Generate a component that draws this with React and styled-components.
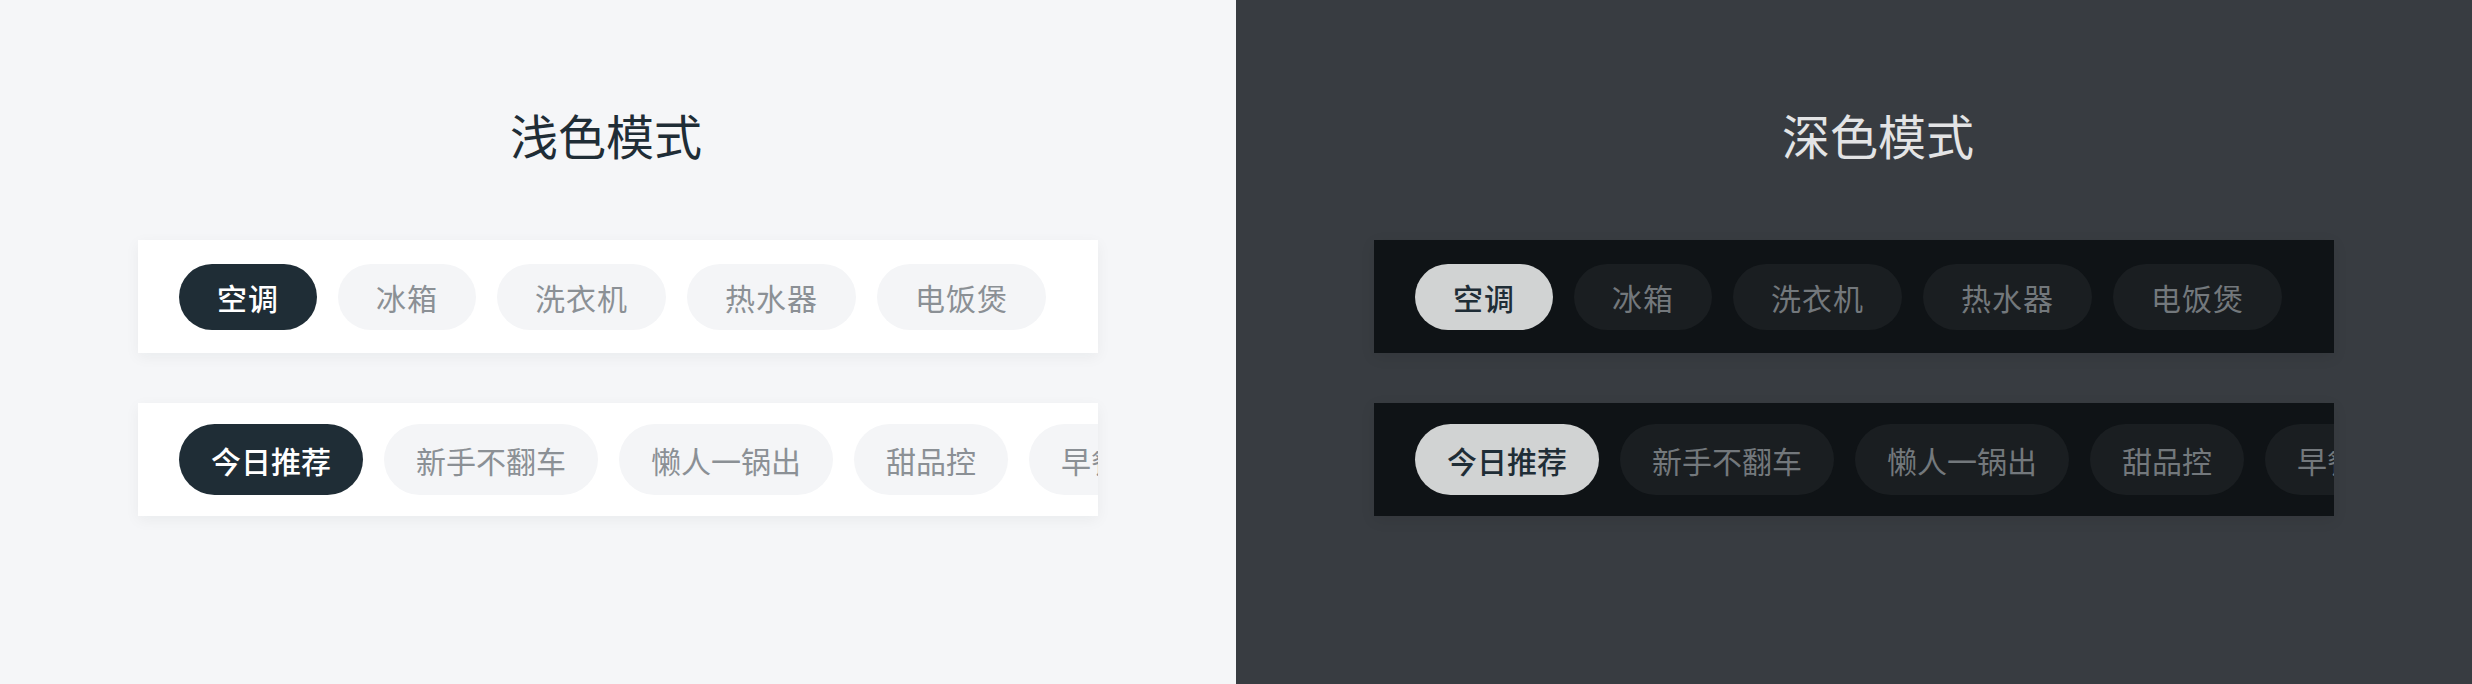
import React from "react";
import styled, {createGlobalStyle} from "styled-components";

const GlobalStyle = createGlobalStyle`
  html, body {
    margin: 0;
    padding: 0;
  }

  body {
    font-family: "Noto Sans CJK SC", "Noto Sans", sans-serif;
  }
`;

const themes = {
    light: {
        bg: "#f5f6f8",
        title: "#1f2d36",
        card: "#ffffff",
        shadow: "0 4px 14px rgba(20, 30, 40, 0.05)",
        chip: "#f4f5f7",
        chipText: "#8b9095",
        active: "#1f2d36",
        activeText: "#ffffff",
    },
    dark: {
        bg: "#383c41",
        title: "#e3e4e5",
        card: "#0f1316",
        shadow: "0 4px 14px rgba(0, 0, 0, 0.08)",
        chip: "#1a1e21",
        chipText: "#73787c",
        active: "#d1d3d3",
        activeText: "#1f2d36",
    },
};

const appliances = ["空调", "冰箱", "洗衣机", "热水器", "电饭煲"];
const recipes = ["今日推荐", "新手不翻车", "懒人一锅出", "甜品控", "早餐"];

const Page = styled.div`
  display: grid;
  grid-template-columns: 1236px 1236px;
  height: 684px;
`;

const Panel = styled.section`
  background: ${({t}) => t.bg};
  display: flex;
  flex-direction: column;
  align-items: center;
  padding-top: 110px;
  box-sizing: border-box;
`;

const Title = styled.h1`
  margin: 0 0 82px;
  font-size: 48px;
  line-height: 48px;
  font-weight: 400;
  color: ${({t}) => t.title};
  padding-left: ${({$shift}) => ($shift > 0 ? $shift * 2 : 0)}px;
  padding-right: ${({$shift}) => ($shift < 0 ? -$shift * 2 : 0)}px;
`;

const Card = styled.div`
  width: 960px;
  height: 113px;
  box-sizing: border-box;
  padding: 0 41px;
  background: ${({t}) => t.card};
  box-shadow: ${({t}) => t.shadow};
  display: flex;
  align-items: center;
  gap: 21px;
  overflow: hidden;
  margin-bottom: 50px;
`;

const Chip = styled.span`
  flex: none;
  display: inline-flex;
  align-items: center;
  justify-content: center;
  height: ${({$big}) => ($big ? 71 : 66)}px;
  padding: 0 ${({$big}) => ($big ? 32 : 38)}px;
  border-radius: 36px;
  font-size: 30px;
  letter-spacing: ${({$big}) => ($big ? 0 : 1)}px;
  white-space: nowrap;
  font-weight: ${({$active}) => ($active ? 500 : 400)};
  background: ${({t, $active}) => ($active ? t.active : t.chip)};
  color: ${({t, $active}) => ($active ? t.activeText : t.chipText)};
`;

const Mode = ({t, title, shift}) => (
    <Panel t={t}>
        <Title t={t} $shift={shift}>{title}</Title>
        <Card t={t}>
            {appliances.map((name, i) => (
                <Chip key={name} t={t} $active={i === 0}>{name}</Chip>
            ))}
        </Card>
        <Card t={t}>
            {recipes.map((name, i) => (
                <Chip key={name} t={t} $big $active={i === 0}>{name}</Chip>
            ))}
        </Card>
    </Panel>
);

const App = () => {
    return (
        <>
            <GlobalStyle/>
            <Page>
                <Mode t={themes.light} title="浅色模式" shift={-12}/>
                <Mode t={themes.dark} title="深色模式" shift={24}/>
            </Page>
        </>
    );
};

export default App;
